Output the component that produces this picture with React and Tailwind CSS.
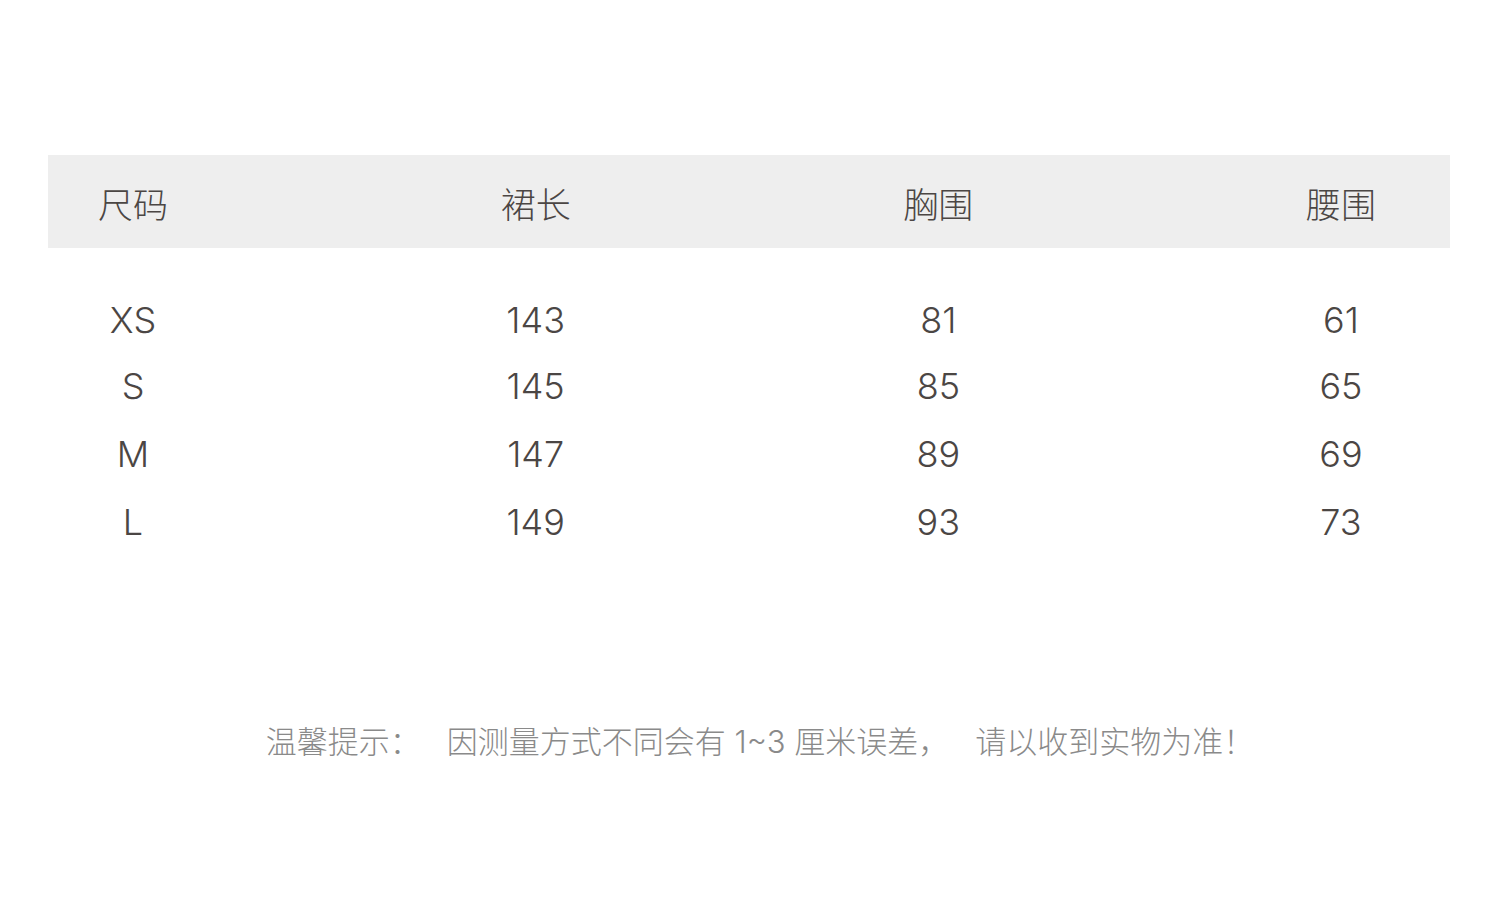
import React from 'react';

const HEADERS = ['尺码', '裙长', '胸围', '腰围'];

const ROWS = [
  { cells: ['XS', '143', '81', '61'], h: 'h-[67px]' },
  { cells: ['S', '145', '85', '65'], h: 'h-[66px]' },
  { cells: ['M', '147', '89', '69'], h: 'h-[69px]' },
  { cells: ['L', '149', '93', '73'], h: 'h-[68px]' },
];

const FONT = "font-['Inter','Noto_Sans_CJK_SC',sans-serif]";

export default function App() {
  return (
    <div className={`w-[1500px] h-[906px] bg-white ${FONT} text-[#4b4644]`}>
      {/* Header band */}
      <div className="pt-[155px] pl-[48px] pr-[50px]">
        <div className="h-[93px] bg-[#eeeeee] flex items-center justify-between pr-[24px]">
          {HEADERS.map((t) => (
            <div key={t} className="w-[170px] text-center text-[35px] leading-none pt-[8px] font-light">
              {t}
            </div>
          ))}
        </div>
      </div>

      {/* Rows */}
      <div className="pl-[48px] pr-[50px] pt-[38px]">
        {ROWS.map((row) => (
          <div key={row.cells[0]} className={`${row.h} flex items-center justify-between pr-[24px]`}>
            {row.cells.map((c, i) => (
              <div key={i} className="w-[170px] text-center text-[36px] leading-none font-light">
                {c}
              </div>
            ))}
          </div>
        ))}
      </div>

      {/* Footer note */}
      <div className="pt-[170px] text-center text-[31px] leading-none text-[#8a8a8a] font-light whitespace-pre pl-[20px]">
        温馨提示：   因测量方式不同会有 1~3 厘米误差，   请以收到实物为准！
      </div>
    </div>
  );
}
